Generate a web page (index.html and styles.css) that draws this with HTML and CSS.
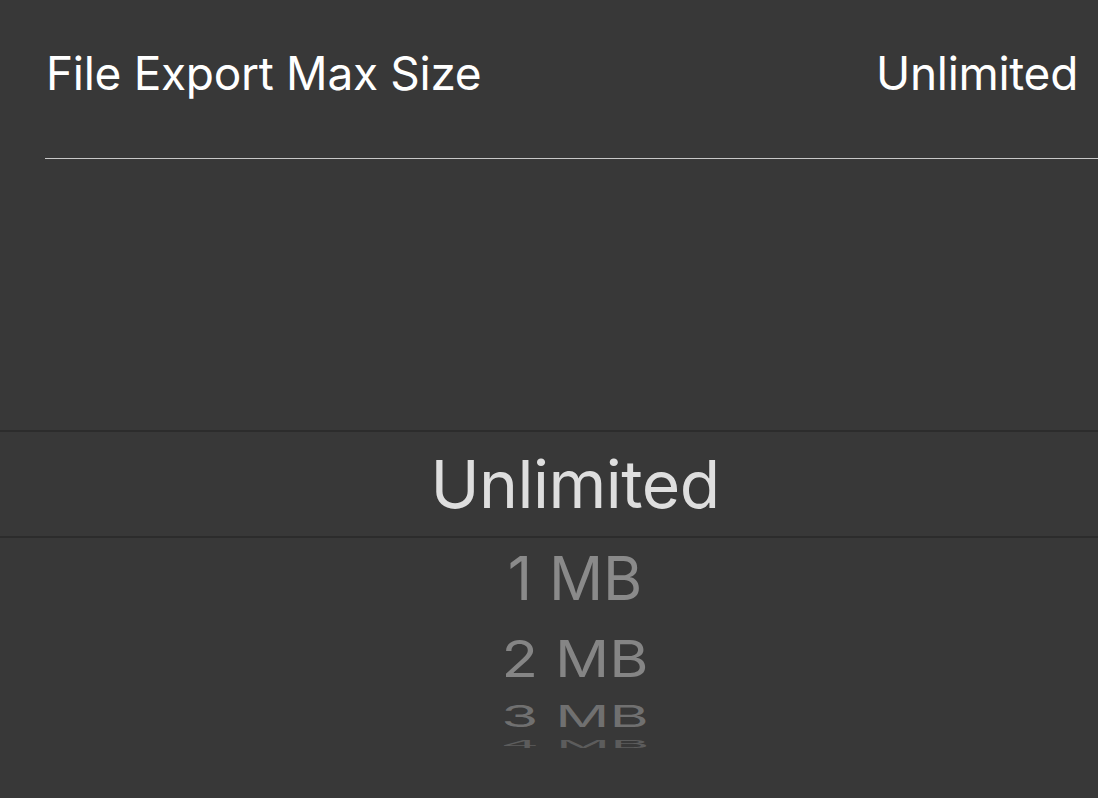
FILE: index.html
```html
<!DOCTYPE html>
<html lang="en">
<head>
  <meta charset="UTF-8" />
  <title>File Export Max Size</title>
  <link rel="stylesheet" href="styles.css">
</head>
<body>
  <div class="setting-row">
    <span class="setting-label">File Export Max Size</span>
    <span class="setting-value">Unlimited</span>
  </div>

  <div class="picker">
    <div class="picker-above"></div>
    <div class="picker-selected">Unlimited</div>
    <div class="picker-below">
      <div class="picker-item item-1">1 MB</div>
      <div class="picker-item item-2">2 MB</div>
      <div class="picker-item item-3">3 MB</div>
      <div class="picker-item item-4">4 MB</div>
    </div>
  </div>
</body>
</html>
```

FILE: styles.css
```css
body {
  margin: 0;
  height: 798px;
  overflow: hidden;
  background: #383838;
  font-family: Inter, 'Noto Sans', sans-serif;
  color: #fff;
}

.setting-row {
  display: flex;
  justify-content: space-between;
  align-items: center;
  height: 159px;
  margin-left: 45px;
  padding-right: 20px;
  border-bottom: 1px solid #c8c8c8;
  box-sizing: border-box;
  padding-bottom: 12px;
}

.setting-label,
.setting-value {
  font-size: 46px;
  letter-spacing: -0.3px;
}

.setting-label {
  margin-left: 1px;
}

.picker {
  display: flex;
  flex-direction: column;
}

.picker-above {
  height: 271px;
}

.picker-selected {
  height: 104px;
  border-top: 2px solid #2c2c2c;
  border-bottom: 2px solid #2c2c2c;
  display: flex;
  align-items: center;
  justify-content: center;
  padding-left: 52px;
  font-size: 66px;
  color: #dedede;
  letter-spacing: -0.5px;
}

.picker-below {
  display: flex;
  flex-direction: column;
  align-items: center;
  padding-left: 52px;
  color: #8a8a8a;
}

.picker-item {
  font-size: 60px;
  transform-origin: center;
}

.item-1 {
  height: 80px;
  line-height: 80px;
}

.item-2 {
  height: 81px;
  line-height: 81px;
  transform: scaleY(0.84);
  color: #858585;
}

.item-3 {
  height: 34px;
  line-height: 34px;
  transform: scaleY(0.5);
  color: #707070;
}

.item-4 {
  height: 22px;
  line-height: 22px;
  transform: scaleY(0.18);
  color: #5c5c5c;
}
```
